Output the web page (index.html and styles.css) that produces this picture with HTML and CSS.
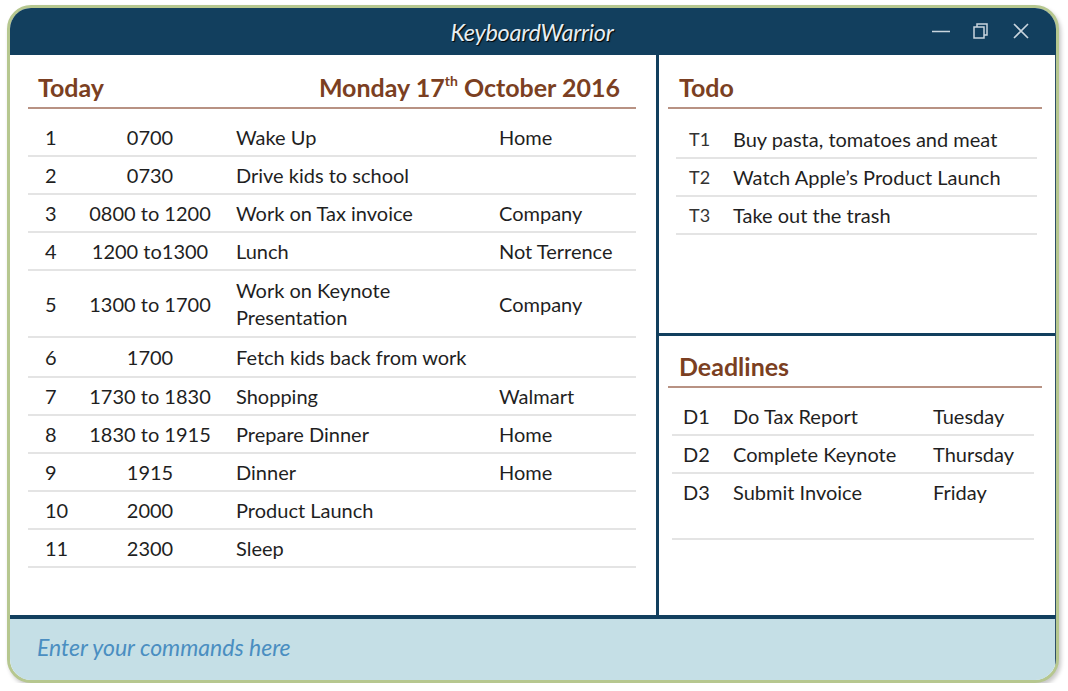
FILE: index.html
```html
<!DOCTYPE html>
<html>
<head>
<meta charset="utf-8">
<link rel="stylesheet" href="styles.css">
</head>
<body>
<div class="window">
  <div class="titlebar">
    <div class="title">KeyboardWarrior</div>
    <div class="controls">
      <svg class="ctl" width="20" height="20" viewBox="0 0 20 20"><line x1="1" y1="10.5" x2="19" y2="10.5" stroke="#c9d5de" stroke-width="1.6"/></svg>
      <svg class="ctl" width="20" height="20" viewBox="0 0 20 20"><rect x="3" y="6" width="10" height="11" fill="none" stroke="#c9d5de" stroke-width="1.5"/><path d="M6 6 V3 H16 V14 H13" fill="none" stroke="#c9d5de" stroke-width="1.5"/></svg>
      <svg class="ctl" width="20" height="20" viewBox="0 0 20 20"><path d="M3 3 L17 17 M17 3 L3 17" stroke="#c9d5de" stroke-width="1.6"/></svg>
    </div>
  </div>
  <div class="main">
    <section class="today">
      <div class="heading heading-today">
        <span>Today</span>
        <span>Monday 17<sup>th</sup> October 2016</span>
      </div>
      <div class="schedule">
        <div class="srow"><span>1</span><span class="time">0700</span><span>Wake Up</span><span>Home</span></div>
        <div class="srow"><span>2</span><span class="time">0730</span><span>Drive kids to school</span><span></span></div>
        <div class="srow"><span>3</span><span class="time">0800 to 1200</span><span>Work on Tax invoice</span><span>Company</span></div>
        <div class="srow"><span>4</span><span class="time">1200 to1300</span><span>Lunch</span><span>Not Terrence</span></div>
        <div class="srow double"><span>5</span><span class="time">1300 to 1700</span><span>Work on Keynote<br>Presentation</span><span>Company</span></div>
        <div class="srow tallish"><span>6</span><span class="time">1700</span><span>Fetch kids back from work</span><span></span></div>
        <div class="srow"><span>7</span><span class="time">1730 to 1830</span><span>Shopping</span><span>Walmart</span></div>
        <div class="srow"><span>8</span><span class="time">1830 to 1915</span><span>Prepare Dinner</span><span>Home</span></div>
        <div class="srow"><span>9</span><span class="time">1915</span><span>Dinner</span><span>Home</span></div>
        <div class="srow"><span>10</span><span class="time">2000</span><span>Product Launch</span><span></span></div>
        <div class="srow"><span>11</span><span class="time">2300</span><span>Sleep</span><span></span></div>
      </div>
    </section>
    <div class="side">
      <section class="todo">
        <div class="heading"><span>Todo</span></div>
        <div class="list todo-list">
          <div class="trow"><span class="tlabel">T1</span><span>Buy pasta, tomatoes and meat</span></div>
          <div class="trow"><span class="tlabel">T2</span><span>Watch Apple’s Product Launch</span></div>
          <div class="trow"><span class="tlabel">T3</span><span>Take out the trash</span></div>
        </div>
      </section>
      <section class="deadlines">
        <div class="heading"><span>Deadlines</span></div>
        <div class="list dl-list">
          <div class="drow"><span>D1</span><span>Do Tax Report</span><span>Tuesday</span></div>
          <div class="drow"><span>D2</span><span>Complete Keynote</span><span>Thursday</span></div>
          <div class="drow last"><span>D3</span><span>Submit Invoice</span><span>Friday</span></div>
        </div>
      </section>
    </div>
  </div>
  <div class="command">Enter your commands here</div>
</div>
</body>
</html>
```

FILE: styles.css
```css
* { box-sizing: border-box; }
html, body { margin: 0; padding: 0; background: #ffffff; }
body {
  font-family: Lato, "Open Sans", "Liberation Sans", sans-serif;
  color: #1f1f1f;
}
.window {
  margin: 5px 0 0 7px;
  width: 1052px;
  height: 678px;
  border: 3px solid #b6c78f;
  border-radius: 24px;
  overflow: hidden;
  display: flex;
  flex-direction: column;
  box-shadow: 2px 3px 4px rgba(0,0,0,0.22);
  background: #fff;
}
.titlebar {
  height: 47px;
  background: #123f5e;
  display: flex;
  align-items: center;
  justify-content: center;
  position: relative;
}
.title {
  font-style: italic;
  font-size: 23.5px;
  color: #e6edf2;
  text-shadow: 1px 1px 1px #000;
  letter-spacing: -0.3px;
  margin-left: -2px;
}
.controls {
  position: absolute;
  right: 25px;
  top: 13px;
  display: flex;
  gap: 20px;
}
.main {
  height: 560px;
  display: flex;
  border-right: 1px solid #2e4e66;
}
.today {
  width: 649px;
  padding: 0 20px 0 18px;
  border-right: 3px solid #123f5e;
}
.heading {
  display: flex;
  justify-content: space-between;
  align-items: center;
  padding: 18px 16px 5px 10px;
  line-height: 29px;
  font-size: 25px;
  font-weight: 700;
  color: #7b3f22;
  border-bottom: 2px solid #b89283;
}
.heading sup {
  font-size: 14px;
  line-height: 0;
  position: relative;
  top: -2px;
  vertical-align: super;
}
.schedule { margin-top: 10px; }
.srow {
  display: grid;
  grid-template-columns: 58px 128px 263px 1fr;
  align-items: center;
  padding: 5px 0 4px;
  line-height: 27px;
  font-size: 20px;
  border-bottom: 2px solid #e4e4e4;
}
.srow span:first-child { padding-left: 17px; }
.srow .time { text-align: center; }
.srow span:nth-child(3), .srow span:nth-child(4) { padding-left: 22px; }
.srow.double { padding: 6px 0 5px; }
.srow.tallish { padding: 6px 0 5px; }
.side {
  flex: 1;
  display: flex;
  flex-direction: column;
}
.todo {
  height: 281px;
  padding: 0 13px 0 9px;
  border-bottom: 3px solid #123f5e;
}
.deadlines {
  flex: 1;
  padding: 0 13px 0 9px;
}
.side .heading { padding-left: 11px; padding-top: 18px; }
.deadlines .heading { padding-top: 16px; }
.todo-list { margin: 12px 5px 0 8px; }
.trow {
  display: grid;
  grid-template-columns: 44px 1fr;
  align-items: center;
  padding: 5px 0 4px 13px;
  line-height: 27px;
  font-size: 20px;
  border-bottom: 2px solid #e4e4e4;
}
.tlabel { font-size: 18px; color: #333; }
.dl-list { margin: 10px 8px 0 4px; }
.drow {
  display: grid;
  grid-template-columns: 50px 200px 1fr;
  align-items: center;
  padding: 5px 0 4px 11px;
  line-height: 27px;
  font-size: 20px;
  border-bottom: 2px solid #e4e4e4;
}
.drow.last { padding-bottom: 32px; }
.command {
  flex: 1;
  border-top: 4px solid #123f5e;
  background: #c5dfe6;
  color: #4a8ec1;
  font-style: italic;
  font-size: 23px;
  padding: 14px 0 0 27px;
  border-right: 1px solid #2e4e66;
}
```
